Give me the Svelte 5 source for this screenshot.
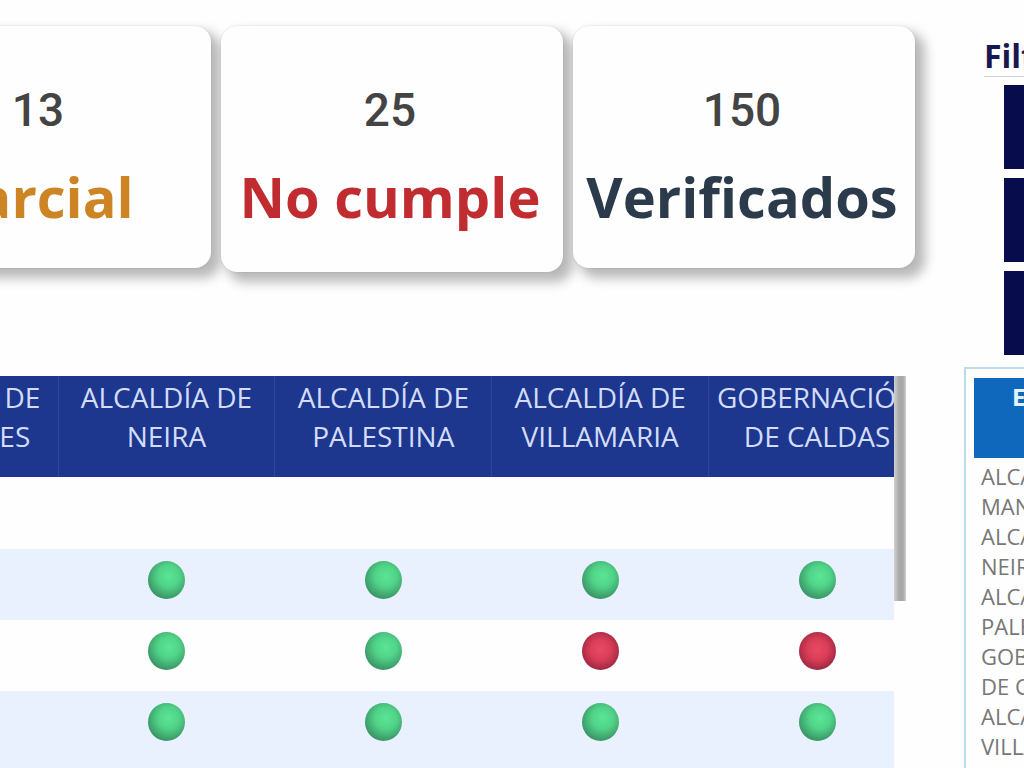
<script>
  /**
   * @type {{ value: number, label: string, tone: string }[]}
   */
  const cards = [
    { value: 13, label: "Parcial", tone: "partial" },
    { value: 25, label: "No cumple", tone: "fail" },
    { value: 150, label: "Verificados", tone: "total" },
  ];

  const entities = [
    ["ALCALDÍA DE", "MANIZALES"],
    ["ALCALDÍA DE", "NEIRA"],
    ["ALCALDÍA DE", "PALESTINA"],
    ["ALCALDÍA DE", "VILLAMARIA"],
    ["GOBERNACIÓN", "DE CALDAS"],
  ];

  // one entry per column, empty string leaves the cell blank
  const rows = [
    ["", "", "", "", ""],
    ["", "ok", "ok", "ok", "ok"],
    ["", "ok", "ok", "bad", "bad"],
    ["", "ok", "ok", "ok", "ok"],
  ];

  const summary = [
    ["ALCALDÍA DE", "MANIZALES"],
    ["ALCALDÍA DE", "NEIRA"],
    ["ALCALDÍA DE", "PALESTINA"],
    ["GOBERNACIÓN", "DE CALDAS"],
    ["ALCALDÍA DE", "VILLAMARIA"],
  ];

  let selected = $state(-1);
</script>

<div class="report">
  <main class="main">
    <section class="cards">
      {#each cards as card (card.label)}
        <article class="card {card.tone}">
          <span class="value">{card.value}</span>
          <span class="label">{card.label}</span>
        </article>
      {/each}
    </section>

    <section class="matrix">
      <div class="matrix-view">
        <table class="matrix-table">
          <thead>
            <tr>
              {#each entities as entity}
                <th>{entity[0]}<br />{entity[1]}</th>
              {/each}
            </tr>
          </thead>
          <tbody>
            {#each rows as row}
              <tr>
                {#each row as status}
                  <td>
                    {#if status}
                      <span class="dot {status}"></span>
                    {/if}
                  </td>
                {/each}
              </tr>
            {/each}
          </tbody>
        </table>
      </div>
      <div class="scroll-thumb"></div>
    </section>
  </main>

  <aside class="side">
    <h2>Filtros</h2>
    <div class="filters">
      {#each [0, 1, 2] as index}
        <button
          class="filter"
          class:active={selected === index}
          aria-label={`Filtro ${index + 1}`}
          onclick={() => (selected = selected === index ? -1 : index)}
        ></button>
      {/each}
    </div>

    <div class="panel">
      <table class="summary">
        <thead>
          <tr><th>Entidad</th></tr>
        </thead>
        <tbody>
          {#each summary as entity}
            <tr>
              <td>{entity[0]}<br />{entity[1]}</td>
            </tr>
          {/each}
        </tbody>
      </table>
    </div>
  </aside>
</div>

<style>
  :global(body) {
    margin: 0;
    background: #fefefe;
  }
  .report {
    display: flex;
    height: 100vh;
    overflow: hidden;
    font-family: "Open Sans", "Noto Sans", sans-serif;
  }
  .main {
    flex: 1;
    min-width: 0;
    overflow: hidden;
  }

  .cards {
    display: flex;
    justify-content: flex-end;
    align-items: flex-start;
    gap: 10px;
    height: 350px;
    padding: 26px 49px 0 0;
    box-sizing: border-box;
  }
  .card {
    display: flex;
    flex: 0 0 342px;
    flex-direction: column;
    align-items: center;
    height: 242px;
    padding-top: 54px;
    box-sizing: border-box;
    border-radius: 16px;
    background: #fefefe;
    box-shadow:
      8px 8px 12px 2px rgba(0, 0, 0, 0.28),
      0 0 2px rgba(0, 0, 0, 0.14);
  }
  .card.fail {
    height: 246px;
  }
  .value,
  .label {
    padding-right: 4px;
  }
  .value {
    color: #444444;
    font-family: Roboto, sans-serif;
    font-size: 46px;
    font-weight: 500;
    line-height: 60px;
  }
  .label {
    margin-top: 24px;
    font-size: 56px;
    font-weight: 700;
    line-height: 64px;
    white-space: nowrap;
  }
  .partial .label {
    color: #cd8424;
  }
  .fail .label {
    color: #c02c30;
  }
  .total .label {
    color: #2b3b4b;
  }

  .matrix {
    display: flex;
    align-items: flex-start;
    margin-top: 26px;
    padding-right: 58px;
  }
  .matrix-view {
    flex: 1;
    min-width: 0;
    overflow: hidden;
  }
  .matrix-table {
    width: 1074px;
    margin-left: -148px;
    border-collapse: collapse;
    table-layout: fixed;
  }
  .matrix-table th {
    height: 101px;
    padding: 2px 0 0;
    box-sizing: border-box;
    border-right: 1px solid #2d489b;
    background: #1c378d;
    color: #d3dcfb;
    font-size: 28px;
    font-weight: 500;
    line-height: 39px;
    vertical-align: top;
    white-space: nowrap;
  }
  .matrix-table th:first-child {
    width: 206px;
  }
  .matrix-table td {
    height: 71px;
    padding: 12px 0 0;
    box-sizing: border-box;
    text-align: center;
    vertical-align: top;
  }
  .matrix-table tbody tr:first-child td {
    height: 72px;
  }
  .matrix-table tbody tr:nth-child(even) {
    background: #e9f1fe;
  }
  .matrix-table tbody tr:last-child td {
    height: 80px;
  }
  .dot {
    display: block;
    width: 37px;
    height: 38px;
    margin: 0 auto;
    border-radius: 50%;
  }
  .dot.ok {
    background: radial-gradient(circle at 56% 40%, #5be596 0%, #50d388 35%, #3a9466 74%);
  }
  .dot.bad {
    background: radial-gradient(circle at 50% 46%, #e94a65 0%, #d93d57 38%, #9f2842 74%);
  }
  .scroll-thumb {
    flex: 0 0 12px;
    height: 225px;
    background: linear-gradient(to right, #d0d0d0, #a8a8a8 45%, #a8a8a8 75%, #d0d0d0);
  }

  .side {
    display: flex;
    flex: 0 0 60px;
    flex-direction: column;
    overflow: hidden;
  }
  .side h2 {
    width: 220px;
    margin: 35px 0 8px 20px;
    border-bottom: 1px solid #d2d2d2;
    color: #16184f;
    font-size: 32px;
    font-weight: 700;
    line-height: 41px;
  }
  .filters {
    display: flex;
    flex-direction: column;
    gap: 9px;
    width: 200px;
    margin-left: 40px;
  }
  .filter {
    height: 84px;
    padding: 0;
    border: none;
    background: #070c4c;
    cursor: pointer;
  }
  .filter.active {
    background: #1c378d;
  }
  .panel {
    flex: 1;
    width: 240px;
    margin-top: 12px;
    padding: 9px 8px 0;
    box-sizing: border-box;
    border: 2px solid #bcdbe6;
    border-bottom: none;
  }
  .summary {
    width: 100%;
    border-collapse: collapse;
  }
  .summary th {
    height: 80px;
    padding: 4px 0 0 38px;
    box-sizing: border-box;
    background: #1068bd;
    color: #e0f4ff;
    font-size: 24px;
    font-weight: 700;
    line-height: 30px;
    text-align: left;
    vertical-align: top;
  }
  .summary td {
    padding: 0 0 0 7px;
    color: #777777;
    font-size: 22px;
    font-weight: 500;
    line-height: 30px;
    white-space: nowrap;
  }
  .summary tbody tr:first-child td {
    padding-top: 3px;
  }
</style>
